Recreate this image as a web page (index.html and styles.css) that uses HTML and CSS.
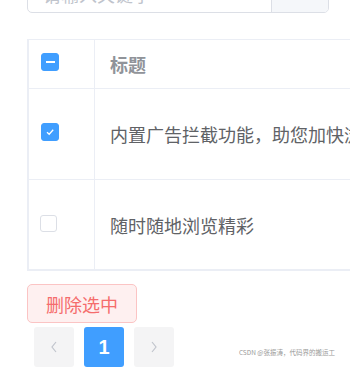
FILE: index.html
```
<!DOCTYPE html>
<html lang="zh">
<head>
<meta charset="utf-8">
<link rel="stylesheet" href="styles.css">
</head>
<body>
<div class="page">
  <div class="search">
    <div class="search-input">请输入关键字</div>
    <div class="search-append"></div>
  </div>

  <div class="table">
    <div class="row head">
      <div class="cell check"><span class="cb indeterminate"></span></div>
      <div class="cell title">标题</div>
    </div>
    <div class="row r1">
      <div class="cell check"><span class="cb checked">
        <svg width="10" height="10" viewBox="0 0 10 10"><path d="M2 5.2 L4.2 7.3 L8.2 2.8" fill="none" stroke="#fff" stroke-width="1.3"/></svg>
      </span></div>
      <div class="cell text">内置广告拦截功能，助您加快浏览速度</div>
    </div>
    <div class="row r2">
      <div class="cell check"><span class="cb"></span></div>
      <div class="cell text">随时随地浏览精彩</div>
    </div>
  </div>

  <button class="btn-danger">删除选中</button>

  <div class="pager">
    <div class="pg-btn">
      <svg width="10" height="14" viewBox="0 0 10 14"><path d="M7 2 L3 7 L7 12" fill="none" stroke="#c0c4cc" stroke-width="1.2"/></svg>
    </div>
    <div class="pg-btn active">1</div>
    <div class="pg-btn">
      <svg width="10" height="14" viewBox="0 0 10 14"><path d="M3 2 L7 7 L3 12" fill="none" stroke="#c0c4cc" stroke-width="1.2"/></svg>
    </div>
    <div class="mark">CSDN @张振涛，代码界的搬运工</div>
  </div>
</div>
</body>
</html>
```
FILE: styles.css
```
html, body {
  margin: 0;
  padding: 0;
  background: #fff;
  overflow: hidden;
}
body {
  font-family: "Noto Sans CJK SC", "Noto Sans", sans-serif;
  width: 350px;
  height: 369px;
}
.page {
  padding-left: 27px;
}
.search {
  display: flex;
  margin-top: -38px;
  width: 302px;
  height: 51px;
  border: 1px solid #dcdfe6;
  border-radius: 5px;
  box-sizing: border-box;
  overflow: hidden;
}
.search-input {
  flex: 1;
  color: #c0c4cc;
  font-size: 18px;
  line-height: 51px;
  padding-left: 15px;
  margin-top: 6px;
}
.search-append {
  width: 56px;
  background: #f5f7fa;
  border-left: 1px solid #dcdfe6;
}
.table {
  margin-top: 26px;
  width: 500px;
  border-left: 2px solid #ebeef5;
  border-top: 1px solid #ebeef5;
  border-bottom: 2px solid #ebeef5;
}
.row {
  display: flex;
  border-bottom: 1px solid #ebeef5;
}
.row.r2 {
  border-bottom: none;
}
.head { height: 48px; }
.r1 { height: 90px; }
.r2 { height: 89px; }
.cell {
  display: flex;
  align-items: center;
}
.check {
  width: 66px;
  border-right: 1px solid #ebeef5;
  padding-left: 12px;
  box-sizing: border-box;
}
.title, .text {
  padding-left: 15px;
  font-size: 18px;
  white-space: nowrap;
}
.title {
  color: #909399;
  font-weight: bold;
}
.text {
  color: #606266;
}
.cb {
  width: 18px;
  height: 18px;
  box-sizing: border-box;
  border: 1px solid #dcdfe6;
  border-radius: 3px;
  background: #fff;
  display: flex;
  align-items: center;
  justify-content: center;
  margin-bottom: 4px;
}
.r2 .cb {
  width: 17px;
  height: 17px;
  margin-left: -1px;
  margin-bottom: 2px;
}
.cb.checked, .cb.indeterminate {
  background: #409eff;
  border-color: #409eff;
}
.cb.indeterminate::after {
  content: "";
  width: 9px;
  height: 2px;
  background: #fff;
}
.btn-danger {
  display: block;
  margin-top: 13px;
  width: 110px;
  height: 39px;
  border: 1px solid #fbc4c4;
  background: #fef0f0;
  color: #f56c6c;
  border-radius: 5px;
  font-family: "Noto Sans CJK SC", sans-serif;
  font-size: 18px;
  padding: 0;
}
.pager {
  display: flex;
  gap: 10px;
  margin-top: 4px;
  padding-left: 7px;
  padding-right: 15px;
}
.pg-btn {
  width: 40px;
  height: 40px;
  background: #f4f4f5;
  border-radius: 3px;
  display: flex;
  align-items: center;
  justify-content: center;
  color: #606266;
}
.pg-btn.active {
  background: #409eff;
  color: #fff;
  font-family: "Liberation Sans", Arial, sans-serif;
  font-weight: bold;
  font-size: 20px;
}
.mark {
  margin-left: auto;
  align-self: flex-end;
  margin-bottom: 10px;
  font-size: 6.5px;
  color: #999;
  white-space: nowrap;
}
```
